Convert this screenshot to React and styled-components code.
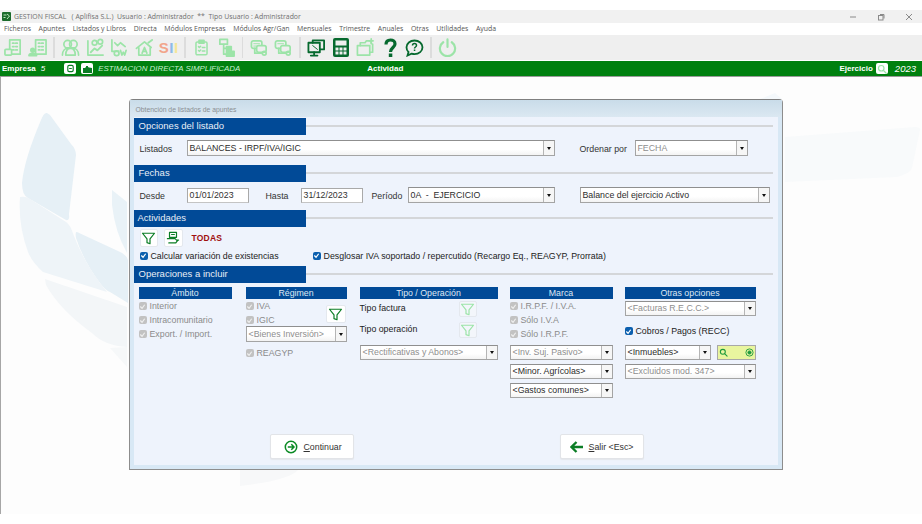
import React from "react";
import styled, { createGlobalStyle } from "styled-components";

const Global = createGlobalStyle`
  html, body { margin: 0; padding: 0; background: #fff; }
  #root { width: 922px; height: 524px; overflow: hidden; }
  * { box-sizing: border-box; }
`;

const LIGHT = "#9ce4a8";
const DARK = "#06692e";

const Page = styled.div`
  width: 922px; height: 524px; padding-top: 10px; display: flex; flex-direction: column;
  background: #fff; font-family: "Liberation Sans", Arial, sans-serif;
`;
const TitleBar = styled.div`
  height: 13px; background: #f1f1f1; display: flex; align-items: center; padding-left: 2px;
  font: 6.9px/13px "Open Sans", sans-serif; font-variant-ligatures: none; font-feature-settings: "liga" 0, "dlig" 0, "calt" 0;
  color: #707070; white-space: pre;
`;
const AppLogo = styled.svg`
  width: 9px; height: 9px; margin-right: 3px; flex: none;
`;
const WindowControls = styled.div`
  margin-left: auto; display: flex; align-items: center; gap: 20px; padding-right: 9px;
`;
const MenuBar = styled.div`
  height: 12px; display: flex; padding-left: 4px; gap: 7.6px; background: #fff;
  font: 6.9px/12px "Open Sans", sans-serif; color: #555;
`;
const Toolbar = styled.div`
  height: 25px; background: #efefef; display: flex; align-items: center; padding-left: 1px;
`;
const ToolSlot = styled.span`
  width: 24.5px; height: 25px; flex: none; display: flex; align-items: center; justify-content: center;
`;
const ToolSep = styled.span`
  width: 8.5px; height: 21px; flex: none; position: relative;
  &::after { content: ""; position: absolute; left: 3px; top: 0; bottom: 0; width: 1.5px; background: #dcdcdc; }
`;
const SiiMark = styled.span`
  font: bold 15px/18px "Liberation Sans", sans-serif; letter-spacing: 0.5px; display: flex;
`;
const SiiLetter = styled.span`
  color: ${p => p.$c};
`;
const StatusBar = styled.div`
  margin-top: 1px; height: 16px; background: #00800f; border-bottom: 1px solid #9a9a9a;
  display: flex; align-items: center; color: #fff; font-size: 8px; padding-left: 2px;
`;
const StatusBold = styled.b`
  font-size: 8px; font-weight: bold; white-space: nowrap;
  margin-left: ${p => p.$ml || 0}px;
`;
const StatusGrow = styled.span`
  flex: 1;
`;
const StatusItalic = styled.i`
  font-size: ${p => p.$fs || 8}px; white-space: nowrap; color: ${p => p.$c || "#fff"};
  margin-left: ${p => p.$ml || 0}px; margin-right: ${p => p.$mr || 0}px;
`;
const StatusIcon = styled.span`
  width: 12px; height: 11px; background: #fff; border-radius: 2px; flex: none;
  display: flex; align-items: center; justify-content: center; margin-left: ${p => p.$ml || 0}px;
`;
const Desktop = styled.div`
  position: relative; height: 437px; background: #fdfdfd; border-left: 1.5px solid #a6a6a6;
  padding: 22px 0 0 127.5px;
`;
const Watermark = styled.svg`
  position: absolute; left: -1.5px; top: -77px; width: 922px; height: 524px;
`;
const Dialog = styled.div`
  position: relative; width: 654px; height: 371px; border: 1px solid #8d8d8d; border-top-color: #7f7f7f;
  border-radius: 4px 4px 0 0; background: #d8e8f5; padding: 0 4px 4px; display: flex; flex-direction: column;
`;
const DialogTitle = styled.div`
  height: 17px; margin: 0 -4px; padding: 3px 0 0 6px; flex: none;
  background: linear-gradient(#c9dce9, #dbe8f2);
  font-size: 6.8px; line-height: 14px; color: #8a8f93;
`;
const Panel = styled.div`
  flex: 1; background: #eef3fc; display: flex; flex-direction: column; padding-top: 1px;
`;
const Section = styled.section`
  height: ${p => p.$h}px; flex: none;
`;
const SectionHead = styled.div`
  display: flex; align-items: center; height: 17px;
  &::after { content: ""; width: 467px; height: 2px; background: #d4d6d9; margin-top: -2px; }
`;
const SectionTitle = styled.h2`
  margin: 0; width: 172px; height: 17px; flex: none; background: #014a97; color: #e8eef6;
  font-size: 9.5px; font-weight: normal; line-height: 16px; padding-left: ${p => p.$pl || 5}px;
`;
const FormRow = styled.div`
  display: flex; align-items: center; padding-left: 6px; margin-top: ${p => p.$mt || 0}px;
  font-size: 8.8px; color: #333;
`;
const FieldLabel = styled.span`
  width: ${p => p.$w}px; flex: none; margin-left: ${p => p.$ml || 0}px; white-space: nowrap; padding-top: 1px;
`;
const TextField = styled.span`
  width: 62px; height: 15px; flex: none; background: #fff; border: 1px solid #a9a9a9;
  border-bottom-color: #c4c4c4; font-size: 8.8px; line-height: 12px; padding-left: 2px; color: #333;
  margin-left: ${p => p.$ml || 0}px;
`;
const SelectBox = styled.div`
  width: ${p => p.$w}px; height: ${p => p.$h || 16}px; flex: none; display: flex; align-items: stretch;
  margin-left: ${p => p.$ml || 0}px; margin-top: ${p => p.$mt || 0}px;
  border: 1px solid #a4a4a4; border-top-color: #8f8f8f; background: linear-gradient(#fff 60%, #f3f3f3);
  font-size: 8.8px; color: ${p => (p.$dim ? "#8e8e8e" : "#2c2c2c")};
`;
const SelectText = styled.span`
  flex: 1; padding-left: 2px; line-height: ${p => (p.$h || 16) - 2}px; white-space: pre; overflow: hidden;
`;
const SelectArrow = styled.span`
  width: 11px; flex: none; background: #f6f6f6; border-left: 1px solid #b5b5b5;
  display: flex; align-items: center; justify-content: center;
  &::after { content: ""; border: 2px solid transparent; border-top: 3px solid #111; border-bottom: 0; }
`;
const IconButton = styled.span`
  width: ${p => p.$w || 19}px; height: ${p => p.$h || 18}px; flex: none; background: ${p => p.$bg || "#fff"};
  border: 1px solid #e4e8ee; border-radius: 2px; display: flex; align-items: center; justify-content: center;
  margin-left: ${p => p.$ml || 0}px; margin-top: ${p => p.$mt || 0}px;
`;
const AllTag = styled.b`
  color: #a00f0f; font-size: 8.5px; margin-left: 9px; letter-spacing: 0.2px;
`;
const CheckRow = styled.div`
  display: flex; align-items: center; height: ${p => p.$h || 14}px; flex: none;
  margin-left: ${p => p.$ml || 0}px; margin-top: ${p => p.$mt || 0}px; gap: 3px; white-space: nowrap;
  font-size: 8.8px; color: ${p => (p.$off ? "#8b8b8b" : "#222")};
`;
const CheckBox = styled.span`
  width: 8px; height: 8px; border-radius: 2px; flex: none; background: ${p => (p.$off ? "#c2c2c2" : "#0b5fae")};
  display: flex; align-items: center; justify-content: center;
`;
const Columns = styled.div`
  display: grid; grid-template-columns: 107px 114px 150px 115px 131px; padding-left: 5px; margin-top: 4px;
`;
const Column = styled.div`
  width: ${p => p.$w}px; display: flex; flex-direction: column;
`;
const ColumnHead = styled.h3`
  margin: 0; height: 12px; background: #014a97; color: #dfe8f3; text-align: center;
  font-size: 8.8px; font-weight: normal; line-height: 12px; flex: none;
`;
const SplitRow = styled.div`
  display: flex; justify-content: space-between; height: 27px; flex: none; padding-right: 1px;
`;
const LabelRow = styled.div`
  display: flex; align-items: center; height: 16px; flex: none; margin-top: ${p => p.$mt}px;
  font-size: 8.8px; color: #222;
`;
const LabelName = styled.span`
  width: 99px; flex: none; padding-bottom: 2px;
`;
const Inline = styled.div`
  display: flex; align-items: center; margin-top: ${p => p.$mt || 0}px;
`;
const SearchField = styled.span`
  width: 39px; height: 15px; background: #e9f59f; border: 1px solid #a8a8a8; margin-left: 6px; flex: none;
  display: flex; align-items: center; justify-content: space-between; padding: 0 1px;
`;
const Footer = styled.div`
  margin-top: auto; padding: 0 0 6px 136px; display: flex; gap: 206px; flex: none;
`;
const ActionButton = styled.span`
  width: 84px; height: 25px; background: #fff; border: 1px solid #e2e4e8; border-radius: 2px;
  box-shadow: 0 1px 1px #e4e7ec; display: flex; align-items: center; padding-left: ${p => p.$pl}px; gap: ${p => p.$gap}px;
  font-size: 8.8px; color: #333;
`;
const Hot = styled.span`
  text-decoration: underline;
`;

const I = ({ s = 19, c = LIGHT, w = 1.8, vb = "0 0 20 20", children }) => (
  <svg width={s} height={s} viewBox={vb} fill="none" stroke={c} strokeWidth={w} strokeLinejoin="round" strokeLinecap="round">{children}</svg>
);
const Funnel = ({ c = "#0b7d25", s = 15, w = 1.6 }) => (
  <I s={s} c={c} w={w}><path d="M2 3h16l-6 7.5V17l-4-1.5v-5z" /></I>
);
const Tick = ({ c = "#fff" }) => (
  <svg width="7" height="7" viewBox="0 0 8 8" fill="none" stroke={c} strokeWidth="1.4"><path d="M1.5 4l2 2 3-4" /></svg>
);
const Check = ({ off, label, ...rest }) => (
  <CheckRow $off={off} {...rest}><CheckBox $off={off}><Tick c={off ? "#eee" : "#fff"} /></CheckBox>{label}</CheckRow>
);
const Select = ({ text, w, h, dim, ml, mt }) => (
  <SelectBox $w={w} $h={h} $dim={dim} $ml={ml} $mt={mt}><SelectText $h={h}>{text}</SelectText><SelectArrow /></SelectBox>
);
const Mag = ({ c = LIGHT, s = 10 }) => (
  <I s={s} c={c} w={2.4}><circle cx="8.5" cy="8.5" r="5.5" /><path d="M13 13l5 5" /></I>
);

const Building = ({ x = 5 }) => (
  <g>
    <rect x={x} y="2" width="11" height="15" />
    <path d={`M${x + 3} 5.5h1.6M${x + 6.4} 5.5h1.6M${x + 3} 9h1.6M${x + 6.4} 9h1.6M${x + 3} 12.5h1.6M${x + 6.4} 12.5h1.6`} strokeWidth="1.8" />
  </g>
);
const tools = [
  <I key="a"><Building x={6} /><rect x="1" y="12" width="7" height="6" rx="1" fill="#efefef" /></I>,
  <I key="b"><Building x={8} /><circle cx="5" cy="13" r="2" fill={LIGHT} /><path d="M1 18.5c.5-3 7-3 8 0z" fill={LIGHT} /></I>,
  "sep",
  <I key="c"><circle cx="7" cy="6.5" r="4" /><circle cx="13" cy="6.5" r="4" /><path d="M1.5 18c0-5 3-7 5.5-7M18.5 18c0-5-3-7-5.5-7M5 18c0-5 2.500-7 5-7s5 2 5 7z" /></I>,
  <I key="d"><path d="M2 3v15h16" /><path d="M5 15l4-4 3 2 5-5" strokeWidth="2" /><circle cx="9" cy="5" r="2.500" /><circle cx="15" cy="4" r="2.500" /></I>,
  <I key="e"><path d="M2 2v12h7" /><path d="M5 5l3 3 3-3 5 4" /><circle cx="7" cy="16" r="2.500" /><path d="M11 13l1.500 5 1.500-3 1.500 3 1.500-5" /></I>,
  <I key="f"><path d="M1.500 11L10 4l7 6M4 10v8h12v-8" /><path d="M7.500 16l2.500-6 2.500 6M8.500 14h3" /><path d="M14 5l4-3" strokeWidth="2" /></I>,
  <SiiMark key="g"><SiiLetter $c="#f2a58a">S</SiiLetter><SiiLetter $c="#8db9e8">I</SiiLetter><SiiLetter $c="#f4e69a">I</SiiLetter></SiiMark>,
  "sep",
  <I key="h" s={17}><rect x="3.500" y="3.500" width="13" height="15" rx="1.500" /><rect x="7" y="1.500" width="6" height="3.500" fill={LIGHT} /><path d="M6.500 9l1 1 1.500-1.500M6.500 13.500l1 1 1.500-1.500M11 10h3M11 14h3" /></I>,
  <I key="i"><rect x="3" y="1.500" width="8" height="5" /><path d="M7 7v10h3M7 11h3" /><rect x="10" y="9" width="5" height="4" fill={LIGHT} /><rect x="10" y="14" width="8" height="5" fill={LIGHT} /></I>,
  "sep",
  <I key="j"><rect x="1.500" y="3" width="11" height="8" rx="2" /><path d="M4 6h6M4 8.500h6" strokeWidth="1" /><rect x="7" y="8" width="10" height="7" rx="2" fill="#efefef" /><circle cx="15" cy="16" r="2" /><path d="M5 11v5h8" /></I>,
  <I key="k"><rect x="1.500" y="3" width="11" height="8" rx="2" /><path d="M4 6h6" strokeWidth="1" /><rect x="7" y="8" width="10" height="7" rx="2" fill="#efefef" /><circle cx="15" cy="16" r="2" /><path d="M5 11v5h8" /></I>,
  "sep",
  <I key="l" c={DARK} w={1.900}><rect x="1.500" y="5" width="12" height="10" /><path d="M7.500 15v3.500M4 18.500h7" /><path d="M6 5V2.500h12v9.500h-4.500" /><path d="M6 8l5 4" strokeWidth="1" /></I>,
  <svg key="m" width="16" height="19" viewBox="0 0 16 19"><rect width="16" height="19" rx="2" fill={DARK} /><rect x="2.500" y="2.500" width="11" height="5" fill="#efefef" /><g fill="#efefef"><rect x="2.500" y="9.500" width="3" height="3" /><rect x="6.500" y="9.500" width="3" height="3" /><rect x="10.500" y="9.500" width="3" height="3" /><rect x="2.500" y="13.500" width="3" height="3" /><rect x="6.500" y="13.500" width="3" height="3" /><rect x="10.500" y="13.500" width="3" height="3" /></g></svg>,
  <I key="n"><path d="M1.500 8h13v10h-13z" /><path d="M4.500 8V5h5l1.500-2h5v3M14.500 15H17.500V6.500" /><path d="M16 1v4M14 3h4" /></I>,
  <svg key="o" width="13" height="20" viewBox="0 0 13 20" fill="none"><path d="M2 6.500C2 3.500 4 2 6.500 2S11 3.500 11 6c0 3.500-4.500 3.500-4.500 8" stroke={DARK} strokeWidth="3.200" /><rect x="4.800" y="15.500" width="3.500" height="3.500" fill={DARK} /></svg>,
  <svg key="p" width="19" height="18" viewBox="0 0 19 18" fill="none" stroke={DARK}><path d="M9.500 1.500c4.500 0 8 3 8 6.800s-3.500 6.800-8 6.800c-1 0-2 -.2-3-.5L2.500 16.500l1-3.500C2 11.800 1.500 10 1.500 8.300c0-3.800 3.500-6.800 8-6.800z" strokeWidth="1.800" /><path d="M7.500 6.500c0-1.200 1-2 2-2s2 .8 2 2c0 1.500-2 1.500-2 3" strokeWidth="1.500" /><rect x="8.800" y="10.500" width="1.500" height="1.500" fill={DARK} stroke="none" /></svg>,
  "sep",
  <I key="q" c={LIGHT} w={2.300}><path d="M5.500 4.500a8 8 0 1 0 9 0" /><path d="M10 1.500v8" /></I>,
];

const menus = ["Ficheros", "Apuntes", "Listados y Libros", "Directa", "Módulos Empresas", "Módulos Agr/Gan", "Mensuales", "Trimestre", "Anuales", "Otras", "Utilidades", "Ayuda"];

export default function App() {
  return (
    <Page>
      <Global />
      <TitleBar>
        <AppLogo viewBox="0 0 9 9"><rect width="9" height="9" rx="1" fill="#1c6b2c" /><path d="M1.500 3h3M1.500 5.500h2M5 2l2.500 2L5 7" stroke="#bfe8c0" strokeWidth="1" fill="none" /></AppLogo>
        {"GESTION FISCAL   ( Aplifisa S.L.)  Usuario : Administrador  **  Tipo Usuario : Administrador"}
        <WindowControls>
          <svg width="8" height="8" viewBox="0 0 8 8" stroke="#8a8a8a"><path d="M1 4h6" /></svg>
          <svg width="8" height="8" viewBox="0 0 8 8" stroke="#8a8a8a" fill="none"><rect x="1.500" y="2.500" width="4.500" height="4.500" /><path d="M3 1.500h4v4" /></svg>
          <svg width="8" height="8" viewBox="0 0 8 8" stroke="#8a8a8a"><path d="M1 1l6 6M7 1l-6 6" /></svg>
        </WindowControls>
      </TitleBar>
      <MenuBar>{menus.map(m => <span key={m}>{m}</span>)}</MenuBar>
      <Toolbar>
        {tools.map((t, i) => (t === "sep" ? <ToolSep key={i} /> : <ToolSlot key={i}>{t}</ToolSlot>))}
      </Toolbar>
      <StatusBar>
        <StatusBold>Empresa</StatusBold>
        <StatusItalic $ml={5}>5</StatusItalic>
        <StatusIcon $ml={19}><I s={9} c="#0b7d25" w={2.500}><rect x="4" y="3" width="12" height="14" rx="3" /><path d="M8 10h4" /></I></StatusIcon>
        <StatusIcon $ml={5}><svg width="9" height="8" viewBox="0 0 9 8" fill="#0b7d25"><path d="M0 3h2l1-1V1h2v1l1 .5 3 .5v5H0z" /></svg></StatusIcon>
        <StatusItalic $ml={5} $c="#c9efcf" $fs={7.9}>ESTIMACION DIRECTA SIMPLIFICADA</StatusItalic>
        <StatusBold $ml={127}>Actividad</StatusBold>
        <StatusGrow />
        <StatusBold>Ejercicio</StatusBold>
        <StatusIcon $ml={3}><Mag /></StatusIcon>
        <StatusItalic $ml={7} $fs={9.500} $mr={6}>2023</StatusItalic>
      </StatusBar>
      <Desktop>
        <Watermark viewBox="0 0 922 524">
          <g fill="#e6f0f6">
            <path d="M47 113Q44 112 41 120Q24 160 22 183Q22 195 28 198L66 220Q70 221 69 214L76 155Q76 149 71 144L50 115Z" />
            <path d="M77 232L118 251Q126 254 128 260V303L110 292Q106 291 100 283Q84 262 76 238Q75 231 77 232Z" />
            <path d="M112 190L127 202V253Q115 232 112 205Z" fill="#e9f2f7" />
          </g>
          <g fill="#eef4f8">
            <path d="M20 197Q26 196 30 199L66 222Q70 224 74 236Q85 265 107 292L43 272Q32 262 28 252Q18 225 20 197Z" />
            <path d="M45 279L127 307V347Q105 346 92 333Q60 310 46 285Z" fill="#f3f6f8" />
            <path d="M110 348L127 347V367Z" fill="#f6f8f9" />
            <path d="M240 470H298Q290 480 240 486Z" fill="#f7f8f9" />
          </g>
          <path d="M785 137L915 127Q921 127 920 130L912 168Q911 173 897 177L785 182Z" fill="#f8fafb" />
          <path d="M760 99L775 93L782 99Z" fill="#f4f8fb" />
        </Watermark>
        <Dialog>
          <DialogTitle>Obtención de listados de apuntes</DialogTitle>
          <Panel>
            <Section $h={47}>
              <SectionHead><SectionTitle>Opciones del listado</SectionTitle></SectionHead>
              <FormRow $mt={5}>
                <FieldLabel $w={47}>Listados</FieldLabel>
                <Select w={368} text="BALANCES - IRPF/IVA/IGIC" />
                <FieldLabel $w={55} $ml={25}>Ordenar por</FieldLabel>
                <Select w={113} text="FECHA" dim />
              </FormRow>
            </Section>
            <Section $h={45}>
              <SectionHead><SectionTitle>Fechas</SectionTitle></SectionHead>
              <FormRow $mt={5}>
                <FieldLabel $w={47}>Desde</FieldLabel>
                <TextField>01/01/2023</TextField>
                <FieldLabel $w={35} $ml={17}>Hasta</FieldLabel>
                <TextField>31/12/2023</TextField>
                <FieldLabel $w={36} $ml={9}>Período</FieldLabel>
                <Select w={147} text="0A  -  EJERCICIO" />
                <Select w={190} ml={25} text="Balance del ejercicio Activo" />
              </FormRow>
            </Section>
            <Section $h={56}>
              <SectionHead><SectionTitle $pl={4}>Actividades</SectionTitle></SectionHead>
              <FormRow $mt={2}>
                <IconButton $w={18}><Funnel /></IconButton>
                <IconButton $ml={6}><I s={14} c="#0b7d25" w={1.700}><rect x="5" y="2" width="10" height="7" /><path d="M8 5h4" /><path d="M2 11h11l2 2h3M4 17h10l3-4" /></I></IconButton>
                <AllTag>TODAS</AllTag>
              </FormRow>
              <FormRow $mt={2}>
                <Check label="Calcular variación de existencias" $h={13} />
                <Check label="Desglosar IVA soportado / repercutido (Recargo Eq., REAGYP, Prorrata)" $h={13} $ml={34} />
              </FormRow>
            </Section>
            <SectionHead><SectionTitle>Operaciones a incluir</SectionTitle></SectionHead>
            <Columns>
              <Column $w={93}>
                <ColumnHead>Ámbito</ColumnHead>
                <Check off label="Interior" />
                <Check off label="Intracomunitario" />
                <Check off label="Export. / Import." />
              </Column>
              <Column $w={101}>
                <ColumnHead>Régimen</ColumnHead>
                <SplitRow>
                  <div>
                    <Check off label="IVA" />
                    <Check off label="IGIC" />
                  </div>
                  <IconButton $w={20} $mt={6}><Funnel /></IconButton>
                </SplitRow>
                <Select w={101} text="<Bienes Inversión>" dim />
                <Check off label="REAGYP" $mt={4} />
              </Column>
              <Column $w={138}>
                <ColumnHead>Tipo / Operación</ColumnHead>
                <LabelRow $mt={2}><LabelName>Tipo factura</LabelName><IconButton $w={18} $h={16} $bg="#f3f6fb"><Funnel c={LIGHT} /></IconButton></LabelRow>
                <LabelRow $mt={5}><LabelName>Tipo operación</LabelName><IconButton $w={18} $h={16} $bg="#f3f6fb"><Funnel c={LIGHT} /></IconButton></LabelRow>
                <Select w={138} h={15} mt={7} text="<Rectificativas y Abonos>" dim />
              </Column>
              <Column $w={103}>
                <ColumnHead>Marca</ColumnHead>
                <Check off label="I.R.P.F. / I.V.A." />
                <Check off label="Sólo I.V.A" />
                <Check off label="Sólo I.R.P.F." />
                <Select w={103} h={15} mt={4} text="<Inv. Suj. Pasivo>" dim />
                <Select w={103} h={15} mt={4} text="<Minor. Agrícolas>" />
                <Select w={103} h={15} mt={4} text="<Gastos comunes>" />
              </Column>
              <Column $w={131}>
                <ColumnHead>Otras opciones</ColumnHead>
                <Select w={131} h={15} mt={2} text="<Facturas R.E.C.C.>" dim />
                <Check label="Cobros / Pagos (RECC)" $mt={8} />
                <Inline $mt={7}>
                  <Select w={86} h={15} text="<Inmuebles>" />
                  <SearchField>
                    <Mag c="#1d9a3c" s={9} />
                    <svg width="9" height="9" viewBox="0 0 10 10" fill="none" stroke="#1d9a3c"><circle cx="5" cy="5" r="4" /><circle cx="5" cy="5" r="1.800" fill="#1d9a3c" /></svg>
                  </SearchField>
                </Inline>
                <Select w={131} h={15} mt={4} text="<Excluidos mod. 347>" dim />
              </Column>
            </Columns>
            <Footer>
              <ActionButton $pl={13} $gap={6}>
                <svg width="14" height="14" viewBox="0 0 14 14" fill="none" stroke="#0b8a24" strokeWidth="1.500"><circle cx="7" cy="7" r="5.700" /><path d="M3.800 7h6M7.300 4.300L10 7 7.300 9.700" /></svg>
                <span><Hot>C</Hot>ontinuar</span>
              </ActionButton>
              <ActionButton $pl={9} $gap={5}>
                <svg width="14" height="12" viewBox="0 0 14 12" fill="none" stroke="#0b7d25" strokeWidth="2.300"><path d="M13 6H2M6.500 1L1.500 6l5 5" /></svg>
                <span><Hot>S</Hot>alir &lt;Esc&gt;</span>
              </ActionButton>
            </Footer>
          </Panel>
        </Dialog>
      </Desktop>
    </Page>
  );
}
